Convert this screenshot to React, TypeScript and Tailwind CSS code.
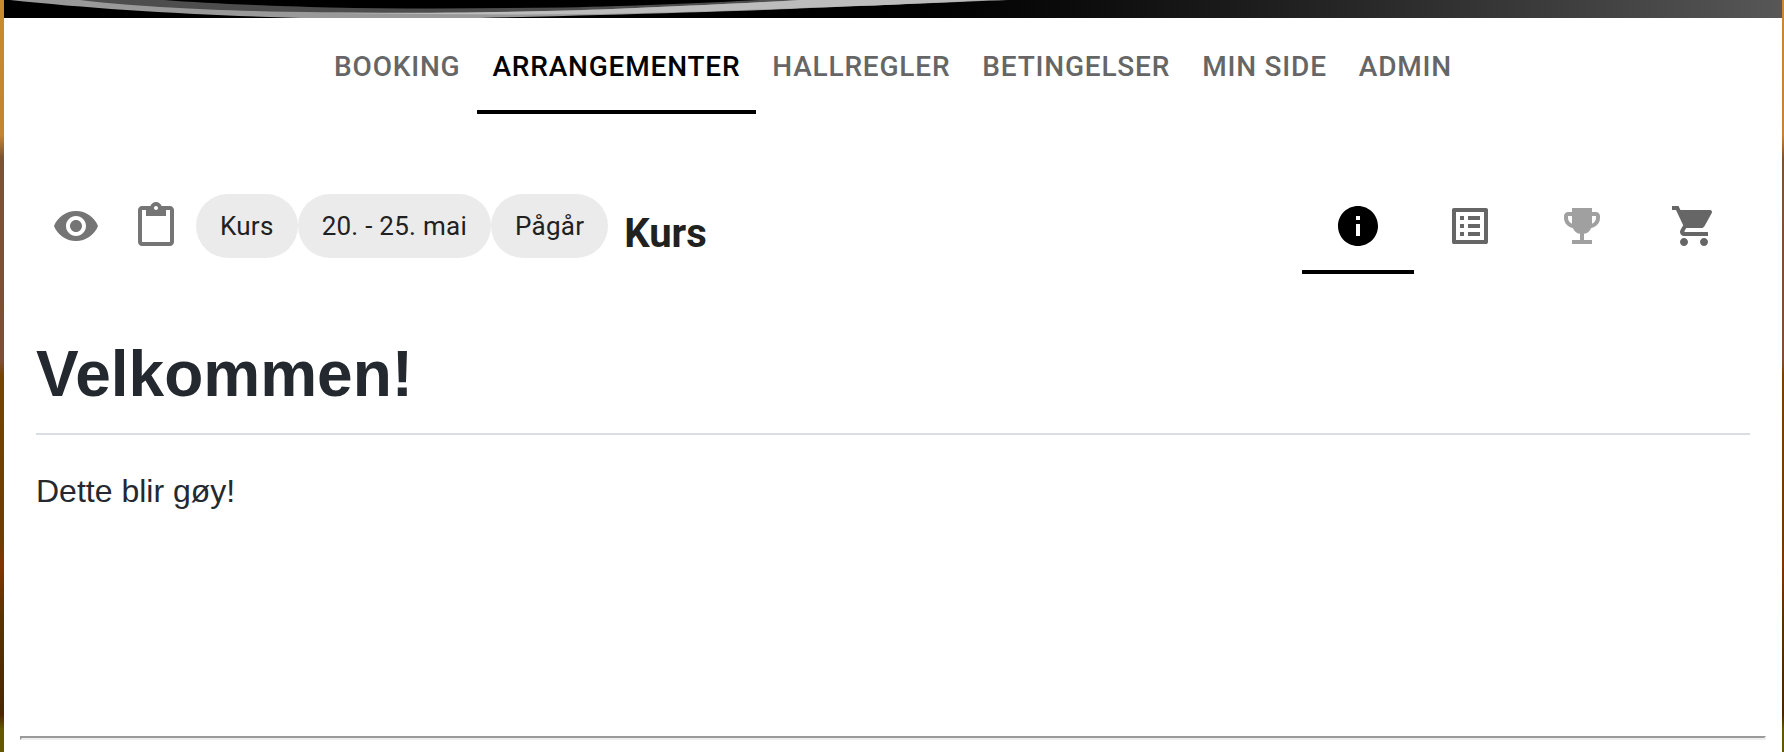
import React from "react";
import {
  MdContentPaste,
  MdEmojiEvents,
  MdInfo,
  MdListAlt,
  MdShoppingCart,
  MdVisibility,
} from "react-icons/md";

const pages = [
  { label: "BOOKING" },
  { label: "ARRANGEMENTER", active: true },
  { label: "HALLREGLER" },
  { label: "BETINGELSER" },
  { label: "MIN SIDE" },
  { label: "ADMIN" },
];

const chips = ["Kurs", "20. - 25. mai", "Pågår"];

const sections = [
  { label: "Informasjon", Icon: MdInfo, style: "border-black text-black" },
  { label: "Deltakere", Icon: MdListAlt, style: "border-transparent text-[#666666]" },
  { label: "Resultater", Icon: MdEmojiEvents, style: "border-transparent text-[#a0a0a0]", disabled: true },
  { label: "Handlekurv", Icon: MdShoppingCart, style: "border-transparent text-[#666666]" },
];

function Banner() {
  return (
    <header className="h-[18px] overflow-hidden bg-linear-to-r from-black from-40% to-[#575757]">
      <svg className="block h-[18px] w-full" viewBox="0 0 1778 18" preserveAspectRatio="none" aria-hidden="true">
        <path d="M0 0H6C90 9 190 15 296 18C350 20 430 20 476 18C520 17 560 16 596 15C670 13 740 11 796 8.500C880 5 950 2 1004 0Z" fill="#999999" />
        <path d="M76 0C110 4 140 6 166 7.500C220 11 300 12.500 400 13C480 13 550 11 596 9.500C680 6 740 3 796 0Z" fill="#4d4d4d" />
        <path d="M160 0C200 3 250 5.500 326 7.500C400 9 480 8.500 560 7.500C630 6 700 3 756 0Z" fill="#000000" />
        <path d="M300 12.500C420 13.500 520 12 596 9.500C680 6 740 3.500 796 0H985C930 3 860 6 796 8C730 10.500 660 13 596 14C500 15 400 14 300 12.500Z" fill="#bcbcbc" />
      </svg>
    </header>
  );
}

export default function App() {
  return (
    <div className="h-screen overflow-hidden bg-[linear-gradient(to_bottom,#c98a30_0%,#c48431_18%,#7d5233_21%,#7f4e34_48%,#774300_50%,#6e3c00_72%,#843400_75%,#5a3300_82%,#4a2600_95%,#655800_97%)] pr-0.5 pl-1 font-[Roboto,sans-serif]">
      <div className="min-h-full bg-white">
        <Banner />
        <nav className="flex justify-center">
          {pages.map(({ label, active }) => (
            <a
              key={label}
              href="#"
              aria-current={active ? "page" : undefined}
              className={`flex h-24 items-center border-b-4 px-4 pt-1.5 text-[28px] leading-none font-medium tracking-[0.02857em] ${
                active ? "border-black text-black" : "border-transparent text-[#666666]"
              }`}
            >
              {label}
            </a>
          ))}
        </nav>

        <div className="flex items-start justify-between px-8 pt-16">
          <div className="flex items-center pt-2 text-[#212121]">
            <button type="button" aria-label="Vis" className="p-4 text-[#757575]">
              <MdVisibility className="size-12" />
            </button>
            <button type="button" aria-label="Kopier" className="p-4 text-[#757575]">
              <MdContentPaste className="size-12" />
            </button>
            {chips.map((chip) => (
              <span key={chip} className="flex h-16 items-center rounded-full bg-[#ebebeb] px-6 text-[26px] tracking-[0.01em]">
                {chip}
              </span>
            ))}
            <h2 className="pt-4 pl-4 text-[40px] leading-none font-bold">Kurs</h2>
          </div>
          <div role="tablist" className="flex">
            {sections.map(({ label, Icon, style, disabled }) => (
              <button
                key={label}
                type="button"
                role="tab"
                aria-label={label}
                disabled={disabled}
                className={`flex h-24 w-28 items-center justify-center border-b-4 pt-1 ${style}`}
              >
                <Icon className="size-12" />
              </button>
            ))}
          </div>
        </div>

        <main className="px-8 pt-15 font-['Liberation_Sans',sans-serif] text-[#24292f]">
          <h1 className="border-b-2 border-[#d8dee4] pb-[19px] text-[64px] leading-[80px] font-bold">Velkommen!</h1>
          <p className="min-h-[301px] pt-8 text-[32px] leading-[48px]">Dette blir gøy!</p>
        </main>
        <hr className="mx-4 h-1 border-2 border-t-[#9a9a9a] border-r-[#eeeeee] border-b-[#eeeeee] border-l-[#9a9a9a]" />
      </div>
    </div>
  );
}
